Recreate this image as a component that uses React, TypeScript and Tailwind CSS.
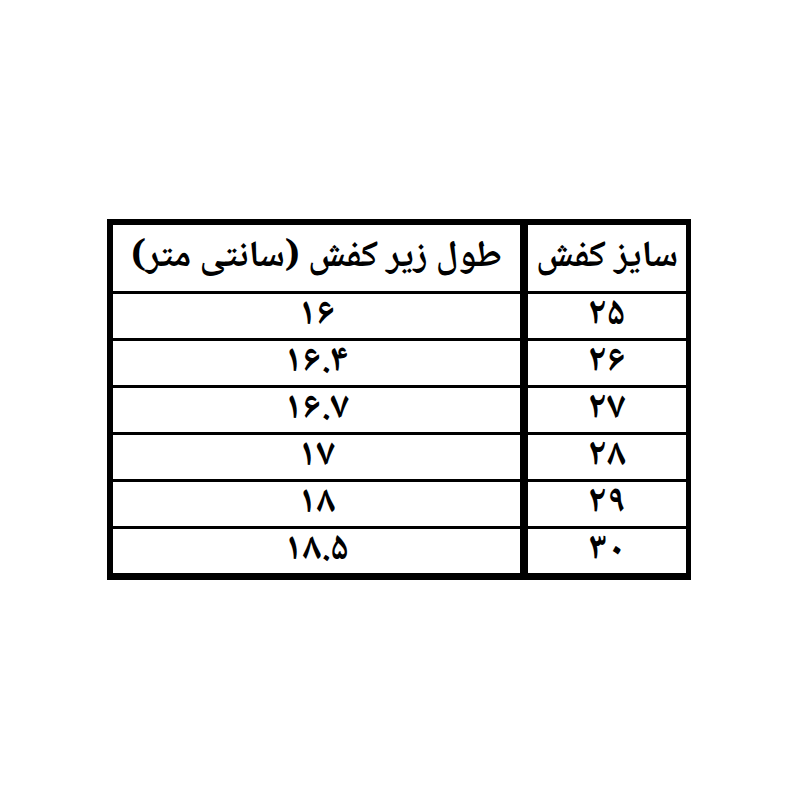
const rows: [string, string][] = [
  ["۱۶", "۲۵"],
  ["۱۶.۴", "۲۶"],
  ["۱۶.۷", "۲۷"],
  ["۱۷", "۲۸"],
  ["۱۸", "۲۹"],
  ["۱۸.۵", "۳۰"],
];

const font = { fontFamily: '"B Nazanin", "Noto Naskh Arabic", "Noto Sans Arabic", "DejaVu Sans", sans-serif' };

export default function App() {
  return (
    <div className="w-[800px] h-[800px] bg-white flex items-start justify-center pt-[219px]">
      <div
        className="ml-[-2px] w-[584px] border-l-[6px] border-r-[5px] border-t-[6px] border-b-[7px] border-black flex font-bold text-black leading-none"
        style={font}
      >
        <div className="w-[407px] flex flex-col">
          <div dir="rtl" className="h-[66px] flex items-center justify-center text-[37px] pb-[2px]">
            طول زیر کفش (سانتی متر)
          </div>
          {rows.map(([len], i) => (
            <div key={i} className="h-[47px] border-t-[3px] border-black flex items-center justify-center text-[38px] leading-[38px]">
              {len}
            </div>
          ))}
        </div>
        <div className="w-[8px] bg-black" />
        <div className="flex-1 flex flex-col">
          <div dir="rtl" className="h-[66px] flex items-center justify-center text-[37px] pb-[2px]">
            سایز کفش
          </div>
          {rows.map(([, size], i) => (
            <div key={i} className="h-[47px] border-t-[3px] border-black flex items-center justify-center text-[38px] leading-[38px]">
              {size}
            </div>
          ))}
        </div>
      </div>
    </div>
  );
}
